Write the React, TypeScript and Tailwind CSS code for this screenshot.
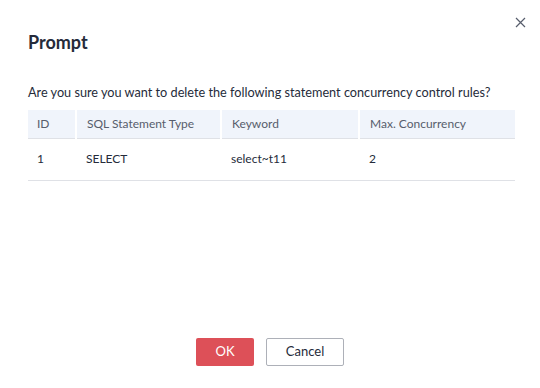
const rows = [{ id: '1', type: 'SELECT', keyword: 'select~t11', max: '2' }];

export default function App() {
  return (
    <div className="w-[540px] h-[388px] bg-white flex flex-col relative text-[#252b3a]" style={{ fontFamily: 'Lato, "Noto Sans", sans-serif' }}>
      <button className="absolute right-[14px] top-[16px] w-[12px] h-[12px] flex items-center justify-center text-[#575d6c]">
        <svg width="11" height="11" viewBox="0 0 11 11" fill="none" stroke="currentColor" strokeWidth="1.2">
          <path d="M1 1L10 10M10 1L1 10" />
        </svg>
      </button>

      <div className="px-[28px] pt-[29px]">
        <h2 className="text-[18px] leading-[26px] font-bold text-[#252b3a]">Prompt</h2>
      </div>

      <div className="px-[28px] pt-[27px] flex-1">
        <p className="text-[12.7px] leading-[20px] text-[#252b3a] whitespace-nowrap">
          Are you sure you want to delete the following statement concurrency control rules?
        </p>
        <table className="mt-[8px] w-[487px] text-[12px] border-collapse">
          <thead>
            <tr className="bg-[#f0f4fb] h-[28px] border-b border-[#dfe1e6] text-[#575d6c]">
              <th className="w-[48px] text-left font-normal pl-[9px] border-r-2 border-white">ID</th>
              <th className="w-[145px] text-left font-normal pl-[10px] border-r-2 border-white">SQL Statement Type</th>
              <th className="w-[138px] text-left font-normal pl-[10px] border-r-2 border-white">Keyword</th>
              <th className="text-left font-normal pl-[10px]">Max. Concurrency</th>
            </tr>
          </thead>
          <tbody>
            {rows.map((r) => (
              <tr key={r.id} className="h-[42px] border-b border-[#dfe1e6]">
                <td className="pl-[9px]">{r.id}</td>
                <td className="pl-[10px]">{r.type}</td>
                <td className="pl-[10px]">{r.keyword}</td>
                <td className="pl-[10px]">{r.max}</td>
              </tr>
            ))}
          </tbody>
        </table>
      </div>

      <div className="flex justify-center gap-[12px] pb-[22px]">
        <button className="w-[58px] h-[28px] rounded-[2px] bg-[#dd5058] text-white text-[13px]">OK</button>
        <button className="w-[78px] h-[28px] rounded-[2px] border border-[#adb0b8] bg-white text-[#252b3a] text-[13px]">Cancel</button>
      </div>
    </div>
  );
}
